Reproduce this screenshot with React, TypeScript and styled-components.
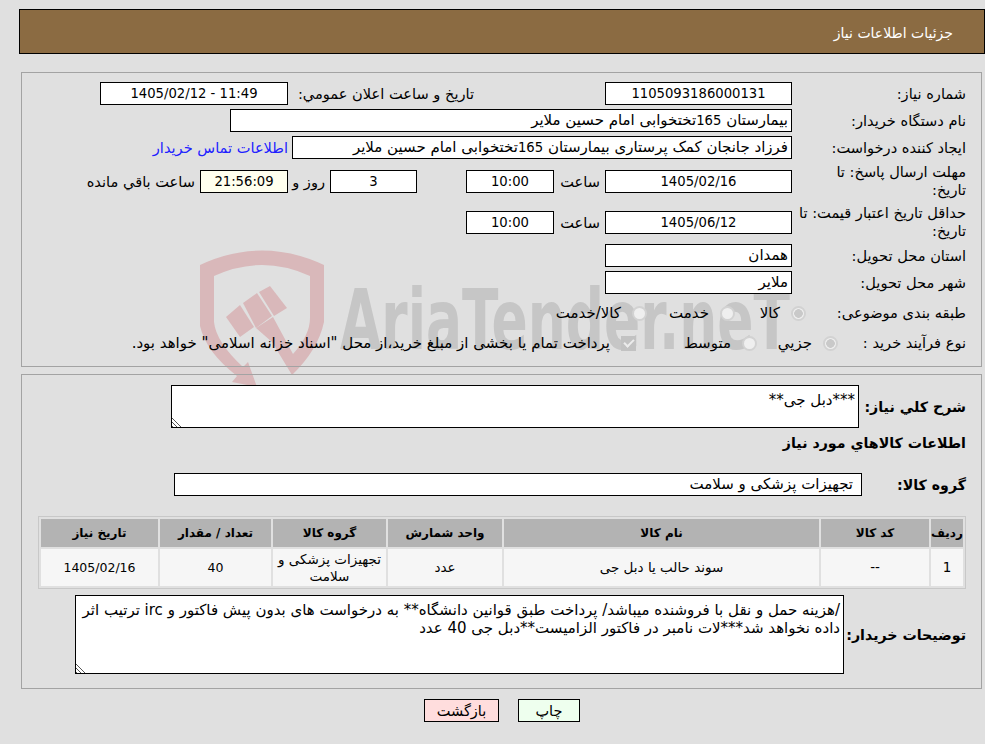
import React from "react";
import styled, { createGlobalStyle } from "styled-components";

const GlobalStyle = createGlobalStyle`
  html, body {
    margin: 0;
    padding: 0;
    background: #e0e0e0;
  }
  body {
    font-family: "DejaVu Sans", "Liberation Sans", sans-serif;
    font-size: 15px;
    color: #000;
  }
`;

const Page = styled.div`
  position: relative;
  box-sizing: border-box;
  width: 985px;
  height: 744px;
  padding: 9px 0 0 19px;
  overflow: hidden;
`;

const Watermark = styled.svg`
  position: absolute;
  left: 0;
  top: 0;
  pointer-events: none;
`;

const Header = styled.div`
  position: relative;
  box-sizing: border-box;
  height: 45px;
  padding: 2px 31px 0 0;
  display: flex;
  align-items: center;
  background: #8b6b42;
  border: 1px solid #000;
  color: #fff;
  font-size: 14px;
`;

const Panel = styled.div<{ $top: number; $height: number; $pad: number }>`
  position: relative;
  box-sizing: border-box;
  height: ${(p) => p.$height}px;
  margin: ${(p) => p.$top}px 3px 0 2px;
  padding: ${(p) => p.$pad}px 15px 0 0;
  border: 1px solid #a3a3a3;
`;

const Row = styled.div<{ $height?: number; $top?: number }>`
  display: flex;
  align-items: center;
  height: ${(p) => p.$height ?? 23}px;
  margin-top: ${(p) => p.$top ?? 0}px;
`;

const Label = styled.div<{ $width?: number }>`
  box-sizing: border-box;
  flex: 0 0 ${(p) => p.$width ?? 174}px;
  font-size: 14.6px;
  line-height: 18px;
  white-space: nowrap;
`;

const BoldLabel = styled(Label)`
  font-weight: bold;
  font-size: 14.2px;
`;

const Field = styled.div<{ $width: number; $align?: string; $bg?: string; $numeric?: boolean; $gap?: number; $pad?: number }>`
  box-sizing: border-box;
  flex: 0 0 ${(p) => p.$width}px;
  height: 23px;
  margin-right: ${(p) => p.$gap ?? 0}px;
  padding: 0 ${(p) => p.$pad ?? 3}px;
  line-height: 21px;
  font-size: ${(p) => (p.$numeric ? "13.2px" : "inherit")};
  text-align: ${(p) => p.$align ?? "center"};
  background: ${(p) => p.$bg ?? "#fff"};
  border: 1px solid #000;
  white-space: nowrap;
  overflow: hidden;
`;

const Digits = styled.span`
  font-size: 13.2px;
`;

const Caption = styled.div<{ $width?: number; $gap?: number }>`
  box-sizing: border-box;
  flex: 0 0 ${(p) => (p.$width ? `${p.$width}px` : "auto")};
  margin-right: ${(p) => p.$gap ?? 0}px;
  padding-right: 5px;
  font-size: 14.6px;
  white-space: nowrap;
`;

const ContactLink = styled.a`
  margin-right: 4px;
  color: #2020ff;
  font-size: 14.6px;
  text-decoration: none;
  white-space: nowrap;
`;

const Choice = styled.label<{ $width?: number }>`
  display: flex;
  align-items: center;
  flex: 0 0 ${(p) => (p.$width ? `${p.$width}px` : "auto")};
  white-space: nowrap;
`;

const Radio = styled.input.attrs({ type: "radio", disabled: true })`
  appearance: none;
  box-sizing: border-box;
  width: 15px;
  height: 15px;
  margin: 0 0 0 11px;
  border-radius: 50%;
  border: 2px solid #d2d2d2;
  background: #efefef;
  &:checked {
    background: radial-gradient(circle, #c9c9c9 0 4px, #efefef 4.6px);
  }
`;

const CheckBox = styled.input.attrs({ type: "checkbox", disabled: true })`
  appearance: none;
  position: relative;
  box-sizing: border-box;
  width: 15px;
  height: 15px;
  margin: 0 0 0 11px;
  background: #c2c2c2;
  &::after {
    content: "";
    position: absolute;
    left: 5px;
    top: 1px;
    width: 4px;
    height: 8px;
    border: solid #ececec;
    border-width: 0 2px 2px 0;
    transform: rotate(45deg);
  }
`;

const Description = styled.textarea<{ $width: number; $height: number }>`
  box-sizing: border-box;
  flex: 0 0 ${(p) => p.$width}px;
  width: ${(p) => p.$width}px;
  height: ${(p) => p.$height}px;
  margin: 0;
  padding: 5px 3px;
  border: 1px solid #000;
  border-radius: 0;
  outline: none;
  background: #fff;
  color: #000;
  font-family: "DejaVu Sans", "Liberation Sans", sans-serif;
  font-size: 15px;
  line-height: 18px;
  overflow: hidden;
  resize: both;
  &::-webkit-resizer {
    background:
      linear-gradient(to top right, transparent 50%, #fff 50%) left bottom / 11px 11px no-repeat,
      repeating-linear-gradient(45deg, #555 0 1px, #fff 1px 3px) left bottom / 11px 11px no-repeat,
      #fff;
  }
`;

const ItemsTable = styled.table`
  width: 928px;
  margin-top: 20px;
  table-layout: fixed;
  border-collapse: separate;
  border-spacing: 2px;
  border: 1px solid #c8c8c8;
`;

const HeadCell = styled.th`
  height: 28px;
  padding: 0;
  background: #b3b3b3;
  font-size: 12px;
  font-weight: bold;
  text-align: center;
`;

const Cell = styled.td<{ $numeric?: boolean }>`
  height: 37px;
  padding: 0 4px;
  background: #f6f6f6;
  font-size: ${(p) => (p.$numeric ? "12.5px" : "13.5px")};
  line-height: 17px;
  text-align: center;
`;

const Actions = styled.div`
  position: relative;
  display: flex;
  justify-content: center;
  gap: 19px;
  margin-top: 10px;
`;

const ActionButton = styled.button<{ $width: number; $bg: string }>`
  box-sizing: border-box;
  width: ${(p) => p.$width}px;
  height: 23px;
  padding: 0;
  background: ${(p) => p.$bg};
  border: 1px solid #000;
  border-radius: 0;
  color: #000;
  font-family: inherit;
  font-size: 14.5px;
`;

const columns = [32, 108, 315, 114, 113, 111, 117];
const headings = ["ردیف", "کد کالا", "نام کالا", "واحد شمارش", "گروه کالا", "تعداد / مقدار", "تاریخ نیاز"];
const values = ["1", "--", "سوند حالب یا دبل جی", "عدد", "تجهیزات پزشکی و سلامت", "40", "1405/02/16"];

const buyerNotes =
  "/هزینه حمل و نقل با فروشنده میباشد/ پرداخت طبق قوانین دانشگاه** به درخواست های بدون پیش فاکتور و irc ترتیب اثر داده نخواهد شد***لات نامبر در فاکتور الزامیست**دبل جی 40 عدد";

const Logo = () => (
  <Watermark width="985" height="744" viewBox="0 0 985 744">
    <g fill="#d9b8ba">
      <path d="M200 265 Q262 236 324 265 L324 322 Q318 350 292 375 L272 342 L256 328 L273 317 L293 354 Q310 335 310 318 L310 276 Q262 254 214 276 L214 322 Q216 342 243 367 L248 362 L257 387 L232 382 L237 376 Q206 352 200 326 Z" />
      <path d="M226 317 L240 305 L254 327 L240 337 Z" />
      <path d="M243 303 L257 293 L272 316 L256 328 Z" />
      <path d="M259 292 L270 286 L287 308 L274 316 Z" />
    </g>
    <text
      x="340"
      y="349"
      direction="ltr"
      fill="#c6c6c6"
      fontFamily="'DejaVu Sans', sans-serif"
      fontWeight="bold"
      fontSize="84"
      textLength="450"
      lengthAdjust="spacingAndGlyphs"
    >
      AriaTender.neT
    </text>
  </Watermark>
);

export default function App() {
  return (
    <Page dir="rtl">
      <GlobalStyle />
      <Logo />
      <Header>جزئیات اطلاعات نیاز</Header>

      <Panel $top={18} $height={295} $pad={9}>
        <Row>
          <Label>شماره نیاز:</Label>
          <Field $width={187} $numeric>1105093186000131</Field>
          <Caption $width={191} $gap={126}>تاریخ و ساعت اعلان عمومي:</Caption>
          <Field $width={188} $numeric>11:49 - 1405/02/12</Field>
        </Row>
        <Row $top={4}>
          <Label>نام دستگاه خریدار:</Label>
          <Field $width={562} $align="right">بیمارستان <Digits>165</Digits>تختخوابی امام حسین ملایر</Field>
        </Row>
        <Row $top={4}>
          <Label>ایجاد کننده درخواست:</Label>
          <Field $width={500} $align="right">فرزاد جانجان کمک پرستاری بیمارستان <Digits>165</Digits>تختخوابی امام حسین ملایر</Field>
          <ContactLink href="#">اطلاعات تماس خریدار</ContactLink>
        </Row>
        <Row $height={38} $top={3}>
          <Label>مهلت ارسال پاسخ: تا<br />تاریخ:</Label>
          <Field $width={187} $numeric>1405/02/16</Field>
          <Caption $width={51}>ساعت</Caption>
          <Field $width={88} $numeric>10:00</Field>
          <Field $width={87} $gap={49} $numeric>3</Field>
          <Caption $width={42}>روز و</Caption>
          <Field $width={88} $bg="#ffffee" $numeric>21:56:09</Field>
          <Caption>ساعت باقي مانده</Caption>
        </Row>
        <Row $height={38} $top={3}>
          <Label>حداقل تاریخ اعتبار قیمت: تا<br />تاریخ:</Label>
          <Field $width={187} $numeric>1405/06/12</Field>
          <Caption $width={51}>ساعت</Caption>
          <Field $width={88} $numeric>10:00</Field>
        </Row>
        <Row $top={3}>
          <Label>استان محل تحویل:</Label>
          <Field $width={187} $align="right">همدان</Field>
        </Row>
        <Row $top={4}>
          <Label>شهر محل تحویل:</Label>
          <Field $width={187} $align="right">ملایر</Field>
        </Row>
        <Row $height={30} $top={4}>
          <Label $width={160}>طبقه بندی موضوعی:</Label>
          <Choice $width={71}><Radio name="kind" defaultChecked />کالا</Choice>
          <Choice $width={88}><Radio name="kind" />خدمت</Choice>
          <Choice><Radio name="kind" />کالا/خدمت</Choice>
        </Row>
        <Row $height={30}>
          <Label $width={128}>نوع فرآیند خرید :</Label>
          <Choice $width={81}><Radio name="process" defaultChecked />جزیي</Choice>
          <Choice $width={121}><Radio name="process" />متوسط</Choice>
          <Choice><CheckBox defaultChecked />پرداخت تمام یا بخشی از مبلغ خرید،از محل "اسناد خزانه اسلامی" خواهد بود.</Choice>
        </Row>
      </Panel>

      <Panel $top={7} $height={315} $pad={10}>
        <Row $height={43}>
          <BoldLabel $width={107}>شرح کلي نياز:</BoldLabel>
          <Description $width={688} $height={43} readOnly defaultValue="***دبل جی**" />
        </Row>
        <Row $height={30}>
          <BoldLabel $width={300}>اطلاعات کالاهاي مورد نياز</BoldLabel>
        </Row>
        <Row $top={15}>
          <BoldLabel $width={104}>گروه کالا:</BoldLabel>
          <Field $width={688} $align="right" $pad={8}>تجهیزات پزشکی و سلامت</Field>
        </Row>
        <ItemsTable>
          <colgroup>
            {columns.map((w, i) => (
              <col key={i} style={{ width: w }} />
            ))}
          </colgroup>
          <thead>
            <tr>
              {headings.map((h) => (
                <HeadCell key={h}>{h}</HeadCell>
              ))}
            </tr>
          </thead>
          <tbody>
            <tr>
              {values.map((v, i) => (
                <Cell key={i} $numeric={i >= 5}>{v}</Cell>
              ))}
            </tr>
          </tbody>
        </ItemsTable>
        <Row $height={79} $top={6}>
          <BoldLabel $width={122}>توضیحات خریدار:</BoldLabel>
          <Description $width={769} $height={79} readOnly defaultValue={buyerNotes} />
        </Row>
      </Panel>

      <Actions>
        <ActionButton $width={62} $bg="#eeffee">چاپ</ActionButton>
        <ActionButton $width={75} $bg="#ffdddd">بازگشت</ActionButton>
      </Actions>
    </Page>
  );
}
